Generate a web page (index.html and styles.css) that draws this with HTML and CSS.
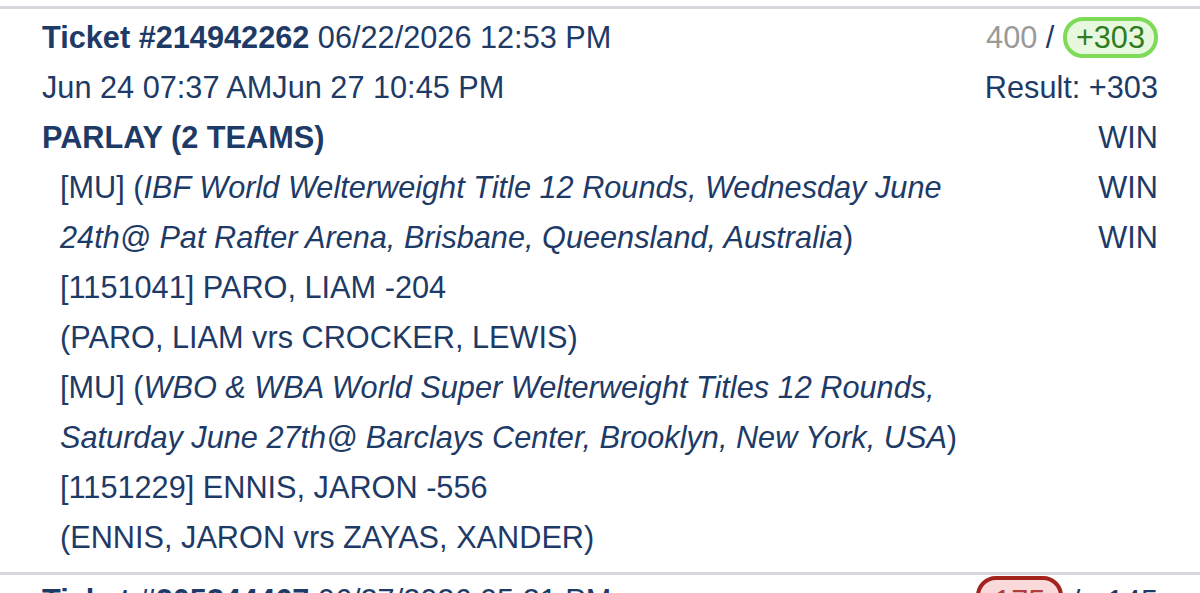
FILE: index.html
```html
<!DOCTYPE html>
<html lang="en">
  <head>
    <meta charset="UTF-8" />
    <meta name="viewport" content="width=device-width, initial-scale=1.0" />
    <title>Tickets</title>
    <link rel="stylesheet" href="styles.css">
  </head>
  <body class="body">
    <div class="ticket">
      <div class="main">
        <p class="row"><b>Ticket #214942262</b> 06/22/2026 12:53 PM</p>
        <p class="row">Jun 24 07:37 AMJun 27 10:45 PM</p>
        <p class="row"><b>PARLAY (2 TEAMS)</b></p>
        <div class="leg">
          <p class="row">[MU] (<i>IBF World Welterweight Title 12 Rounds, Wednesday June 24th@ Pat Rafter Arena, Brisbane, Queensland, Australia</i>)</p>
          <p class="row">[1151041] PARO, LIAM -204</p>
          <p class="row">(PARO, LIAM vrs CROCKER, LEWIS)</p>
        </div>
        <div class="leg">
          <p class="row">[MU] (<i>WBO &amp; WBA World Super Welterweight Titles 12 Rounds, Saturday June 27th@ Barclays Center, Brooklyn, New York, USA</i>)</p>
          <p class="row">[1151229] ENNIS, JARON -556</p>
          <p class="row">(ENNIS, JARON vrs ZAYAS, XANDER)</p>
        </div>
      </div>
      <div class="side">
        <p class="row"><span class="risk">400</span> / <span class="pill win">+303</span></p>
        <p class="row">Result: +303</p>
        <p class="row">WIN</p>
        <p class="row">WIN</p>
        <p class="row">WIN</p>
      </div>
    </div>
    <div class="ticket">
      <div class="main">
        <p class="row"><b>Ticket #205344467</b> 06/27/2026 05:21 PM</p>
      </div>
      <div class="side">
        <p class="row"><span class="pill loss">175</span> / +145</p>
      </div>
    </div>
  </body>
</html>
```
FILE: styles.css
```css
.body {
  margin: 0;
  background-color: #ffffff;
  font-family: "Liberation Sans", Arial, sans-serif;
  font-size: 30.7px;
  color: #1e3a66;
}
p {
  margin: 0;
}
.ticket {
  display: flex;
  justify-content: space-between;
  margin-top: 6px;
  border-top: 3px solid #d6d8de;
  padding: 4px 42px 9px 42px;
}
.ticket + .ticket {
  margin-top: 0;
  padding-top: 1px;
}
.main {
  width: 948px;
}
.row {
  line-height: 50px;
}
.leg {
  padding-left: 18px;
}
.side {
  text-align: right;
  white-space: nowrap;
}
.risk {
  color: #9a9a9a;
}
.pill {
  display: inline-block;
  line-height: 31px;
  padding: 1px 9px;
  border-radius: 20px;
  border-width: 4px;
  border-style: solid;
}
.win {
  background-color: #e8f8df;
  border-color: #7edb58;
  color: #2f7c22;
}
.loss {
  background-color: #f9d9d9;
  border-color: #a3241f;
  color: #b04040;
  padding: 6px 14px;
}
```
